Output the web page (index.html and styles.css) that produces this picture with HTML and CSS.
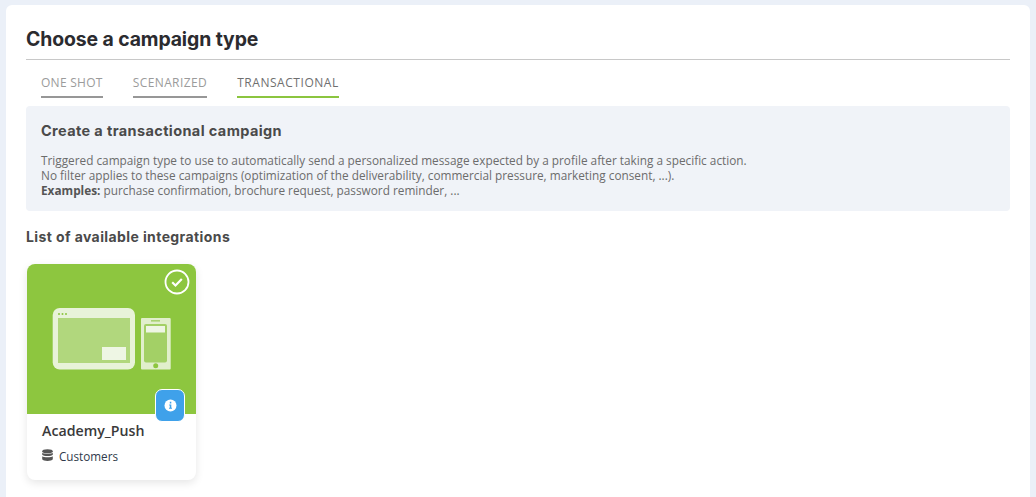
FILE: index.html
```html
<!DOCTYPE html>
<html lang="en">
<head>
<meta charset="utf-8">
<title>Choose a campaign type</title>
<link rel="stylesheet" href="styles.css">
</head>
<body>
<main class="page">
  <h1 class="title">Choose a campaign type</h1>
  <nav class="tabs">
    <a class="tab">ONE SHOT</a>
    <a class="tab">SCENARIZED</a>
    <a class="tab tab-active">TRANSACTIONAL</a>
  </nav>
  <section class="info">
    <h2 class="info-title">Create a transactional campaign</h2>
    <p class="info-text">Triggered campaign type to use to automatically send a personalized message expected by a profile after taking a specific action.<br>No filter applies to these campaigns (optimization of the deliverability, commercial pressure, marketing consent, ...).<br><strong>Examples:</strong> purchase confirmation, brochure request, password reminder, ...</p>
  </section>
  <h3 class="list-title">List of available integrations</h3>
  <article class="card">
    <div class="card-top">
      <svg class="illus" width="120" height="65" viewBox="0 0 120 65">
        <rect x="0.700" y="0" width="82.300" height="61.500" rx="7" fill="#e8f3d9"/>
        <rect x="6" y="10" width="72" height="45" fill="#b1d77d"/>
        <rect x="50" y="39" width="24" height="13" fill="#eef6e4"/>
        <circle cx="7" cy="6" r="1" fill="#8dc63f"/><circle cx="10.500" cy="6" r="1" fill="#8dc63f"/><circle cx="14" cy="6" r="1" fill="#8dc63f"/>
        <rect x="89" y="10" width="29.700" height="51.500" rx="1" fill="#e1efcc"/>
        <rect x="92" y="16" width="23" height="38.500" rx="2" fill="#a3d066"/>
        <rect x="94" y="18" width="19" height="6.500" fill="#eef6e4"/>
        <rect x="99" y="12.200" width="9" height="1.300" fill="#9ccb5c"/>
        <circle cx="103.700" cy="57.700" r="2.500" fill="#8dc63f"/>
      </svg>
      <svg class="check" width="26" height="26" viewBox="0 0 26 26">
        <circle cx="13" cy="13" r="11.500" fill="none" stroke="#fff" stroke-width="1.800"/>
        <path d="M8.200 13.300l3.300 3.200 6.300-6.400" fill="none" stroke="#fff" stroke-width="2.200"/>
      </svg>
      <div class="badge">
        <svg width="13" height="13" viewBox="0 0 13 13">
          <circle cx="6.500" cy="6.500" r="6" fill="#fff"/>
          <path d="M5.200 5.400h2.100v3.300h.7v1H5v-1h.8V6.400h-.6z M5.800 2.700h1.500v1.700H5.800z" fill="#3fa1ea"/>
        </svg>
      </div>
    </div>
    <div class="card-body">
      <div class="card-name">Academy_Push</div>
      <div class="card-meta">
        <svg class="meta-icon" width="11" height="13" viewBox="0 0 11 13">
          <ellipse cx="5.500" cy="2.200" rx="5.300" ry="2" fill="#555"/>
          <path d="M.2 3.700c1.200 1.500 9.400 1.500 10.600 0v2c-1.200 1.800-9.400 1.800-10.600 0z" fill="#555"/>
          <path d="M.2 7.200c1.200 1.500 9.400 1.500 10.600 0v3.100c-1.200 2.300-9.400 2.300-10.600 0z" fill="#555"/>
        </svg>
        <span>Customers</span>
      </div>
    </div>
  </article>
</main>
</body>
</html>
```
FILE: styles.css
```css
html, body {
  margin: 0;
  height: 100%;
  overflow: hidden;
}
body {
  background: #ebf0f8;
  padding: 5px 6px 0;
  box-sizing: border-box;
  font-family: "Open Sans", "Liberation Sans", sans-serif;
}
.page {
  background: #fff;
  border-radius: 6px 6px 0 0;
  padding: 21px 20px 0;
  height: 100%;
  box-sizing: border-box;
}
.title {
  margin: 0;
  padding-bottom: 7px;
  border-bottom: 1px solid #c8c8c8;
  font: 700 19.400px/26px Inter, sans-serif;
  color: #2b2b2f;
  letter-spacing: -0.1px;
}
.tabs {
  display: flex;
  gap: 30px;
  margin: 15px 0 8px 15px;
}
.tab {
  font-size: 12px;
  line-height: 16px;
  padding-bottom: 5px;
  color: #9b9b9b;
  border-bottom: 2px solid #979797;
  letter-spacing: 0.27px;
}
.tab-active {
  color: #6f6f6f;
  border-bottom-color: #8bc53f;
  letter-spacing: 0.55px;
}
.tab:nth-child(2) {
  letter-spacing: 0.4px;
}
.info {
  background: #f0f3f8;
  border-radius: 4px;
  padding: 15px;
  height: 105px;
  box-sizing: border-box;
}
.info-title {
  margin: 0 0 12px;
  font: 700 14.500px/20px Inter, sans-serif;
  letter-spacing: 0.38px;
  color: #4a4a4a;
}
.info-text {
  margin: 0;
  font: 400 11.800px/15px "Open Sans", sans-serif;
  color: #6c6c6c;
}
.info-text strong {
  color: #555;
}
.list-title {
  margin: 16px 0 17px;
  font: 700 14px/20px Inter, sans-serif;
  letter-spacing: 0.4px;
  color: #4a4a4a;
}
.card {
  width: 169px;
  height: 216px;
  margin-left: 1px;
  border-radius: 8px;
  background: #fff;
  box-shadow: 0 3px 9px rgba(0, 0, 0, 0.1);
}
.card-top {
  position: relative;
  height: 150px;
  background: #8dc63f;
  border-radius: 8px 8px 0 0;
  display: flex;
  padding: 44px 0 0 25px;
  box-sizing: border-box;
}
.check {
  position: absolute;
  top: 5px;
  right: 6px;
}
.badge {
  position: absolute;
  left: 128px;
  top: 125px;
  width: 30px;
  height: 33px;
  box-sizing: border-box;
  border: 1px solid #fff;
  border-radius: 7px;
  background: #3fa1ea;
  display: flex;
  align-items: center;
  justify-content: center;
}
.card-body {
  padding: 7px 15px 0;
}
.card-name {
  font: 600 14.200px/20px "Open Sans", sans-serif;
  color: #3a3a3a;
}
.card-meta {
  display: flex;
  align-items: center;
  gap: 6px;
  margin-top: 7px;
  font-size: 11.700px;
  line-height: 16px;
  color: #2f3a4a;
}
.meta-icon {
  margin-top: -1px;
}
```
